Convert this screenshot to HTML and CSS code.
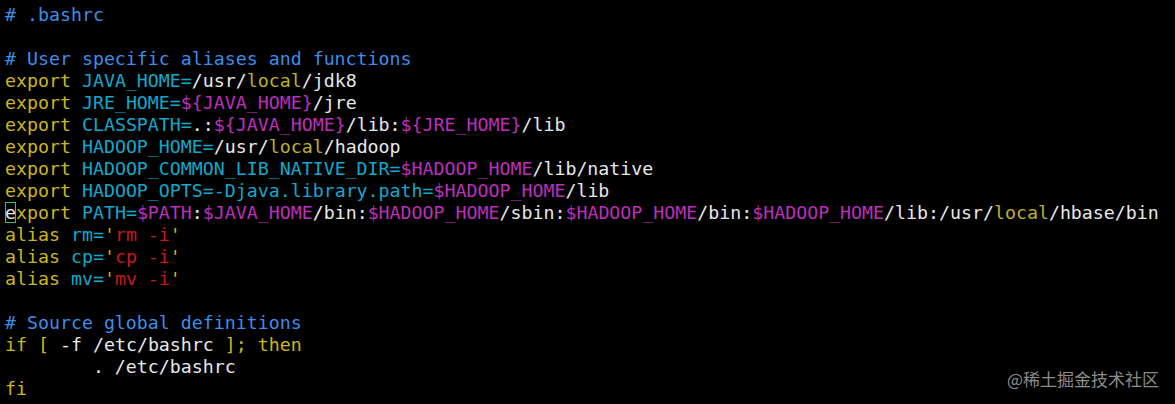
FILE: index.html
```html
<!DOCTYPE html>
<html>
<head>
<meta charset="utf-8">
<link rel="stylesheet" href="styles.css">
</head>
<body>
<div class="term">
<pre class="code"><span class="c"># .bashrc</span>

<span class="c"># User specific aliases and functions</span>
<span class="k">export</span> <span class="v">JAVA_HOME=</span><span class="w">/usr/</span><span class="y">local</span><span class="w">/jdk8</span>
<span class="k">export</span> <span class="v">JRE_HOME=</span><span class="m">${JAVA_HOME}</span><span class="w">/jre</span>
<span class="k">export</span> <span class="v">CLASSPATH=</span><span class="w">.:</span><span class="m">${JAVA_HOME}</span><span class="w">/lib:</span><span class="m">${JRE_HOME}</span><span class="w">/lib</span>
<span class="k">export</span> <span class="v">HADOOP_HOME=</span><span class="w">/usr/</span><span class="y">local</span><span class="w">/hadoop</span>
<span class="k">export</span> <span class="v">HADOOP_COMMON_LIB_NATIVE_DIR=</span><span class="m">$HADOOP_HOME</span><span class="w">/lib/native</span>
<span class="k">export</span> <span class="v">HADOOP_OPTS=-Djava.library.path=</span><span class="m">$HADOOP_HOME</span><span class="w">/lib</span>
<span class="cur">e</span><span class="k">xport</span> <span class="v">PATH=</span><span class="m">$PATH</span><span class="w">:</span><span class="m">$JAVA_HOME</span><span class="w">/bin:</span><span class="m">$HADOOP_HOME</span><span class="w">/sbin:</span><span class="m">$HADOOP_HOME</span><span class="w">/bin:</span><span class="m">$HADOOP_HOME</span><span class="w">/lib:/usr/</span><span class="y">local</span><span class="w">/hbase/bin</span>
<span class="k">alias</span> <span class="v">rm=</span><span class="k">'</span><span class="r">rm -i</span><span class="k">'</span>
<span class="k">alias</span> <span class="v">cp=</span><span class="k">'</span><span class="r">cp -i</span><span class="k">'</span>
<span class="k">alias</span> <span class="v">mv=</span><span class="k">'</span><span class="r">mv -i</span><span class="k">'</span>

<span class="c"># Source global definitions</span>
<span class="k">if</span> <span class="k">[</span> <span class="w">-f /etc/bashrc </span><span class="k">];</span> <span class="k">then</span>
<span class="w">        . /etc/bashrc</span>
<span class="k">fi</span></pre>
<div class="mark">@稀土掘金技术社区</div>
</div>
</body>
</html>
```

FILE: styles.css
```css
html, body {
  margin: 0;
  padding: 0;
  background: #000;
}
.term {
  position: relative;
  width: 1175px;
  height: 404px;
  background: #000;
  overflow: hidden;
}
.code {
  margin: 0;
  padding: 4px 0 0 5px;
  font-family: "DejaVu Sans Mono", monospace;
  font-size: 18.25px;
  line-height: 22px;
  color: #e5e5e5;
  white-space: pre;
}
.c { color: #3b8eea; }
.k { color: #cdb51c; }
.v { color: #11a8cd; }
.m { color: #bc2fbc; }
.w { color: #e8e8e8; }
.y { color: #bfae2a; }
.r { color: #c41a1a; }
.cur {
  color: #e8e8e8;
  outline: 1px solid #3cc83c;
  outline-offset: -1px;
}
.mark {
  position: absolute;
  right: 16px;
  bottom: 14px;
  font-family: "Noto Sans CJK SC", "Liberation Sans", sans-serif;
  font-size: 17px;
  line-height: 22px;
  color: #8c8c8c;
}
```
